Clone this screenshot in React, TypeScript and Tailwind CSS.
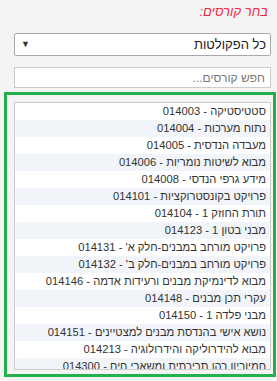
import React from 'react';

interface Course {
  code: string;
  name: string;
}

const courses: Course[] = [
  { code: '014003', name: 'סטטיסטיקה' },
  { code: '014004', name: 'נתוח מערכות' },
  { code: '014005', name: 'מעבדה הנדסית' },
  { code: '014006', name: 'מבוא לשיטות נומריות' },
  { code: '014008', name: 'מידע גרפי הנדסי' },
  { code: '014101', name: 'פרויקט בקונסטרוקציות' },
  { code: '014104', name: 'תורת החוזק 1' },
  { code: '014123', name: 'מבני בטון 1' },
  { code: '014131', name: "פרויקט מורחב במבנים-חלק א'" },
  { code: '014132', name: "פרויקט מורחב במבנים-חלק ב'" },
  { code: '014146', name: 'מבוא לדינמיקת מבנים ורעידות אדמה' },
  { code: '014148', name: 'עקרי תכן מבנים' },
  { code: '014150', name: 'מבני פלדה 1' },
  { code: '014151', name: 'נושא אישי בהנדסת מבנים למצטיינים' },
  { code: '014213', name: 'מבוא להידרוליקה והידרולוגיה' },
  { code: '014300', name: 'חמיוריוו רהו תרירתית ומשארי חיח' },
];

export default function App() {
  return (
    <div
      dir="rtl"
      className="w-[277px] h-[381px] overflow-hidden bg-[#f4f4f4] text-[#333]"
      style={{ fontFamily: '"Liberation Sans", Arial, sans-serif' }}
    >
      {/* header */}
      <div className="pr-[9px] pt-[3px] h-[22px] text-[13px] leading-[18px] italic text-[#f7263f]">
        בחר קורסים:
      </div>

      {/* faculty select */}
      <div className="mt-[11px] mr-[6px] ml-[14px] h-[23px] flex items-center justify-between bg-white border border-[#a9a9a9] rounded-[2px] pr-[4px] pl-[6px]">
        <span className="text-[13px] text-[#222]">כל הפקולטות</span>
        <span className="text-[9px] text-[#333] leading-none">▼</span>
      </div>

      {/* search */}
      <div className="mt-[11px] mr-[6px] ml-[14px] h-[21px] flex items-center bg-white border border-[#cccccc] pr-[5px]">
        <span className="text-[12px] text-[#777]">חפש קורסים...</span>
      </div>

      {/* course list */}
      <div className="mt-[4px] mr-[1px] ml-[4px] h-[285px] border-[3px] border-[#22b14c] pt-[7px] pl-[7px] pr-[2px] pb-[4px]">
        <div className="h-[268px] overflow-hidden bg-white border border-[#cccccc]">
          {courses.map((course, index) => (
            <div
              key={course.code}
              className={
                'h-[17px] flex items-center pr-[4px] text-[11.2px] whitespace-nowrap ' +
                (index % 2 === 1 ? 'bg-[#f1f4f8]' : 'bg-white')
              }
            >
              {course.name} - {course.code}
            </div>
          ))}
        </div>
      </div>
    </div>
  );
}
